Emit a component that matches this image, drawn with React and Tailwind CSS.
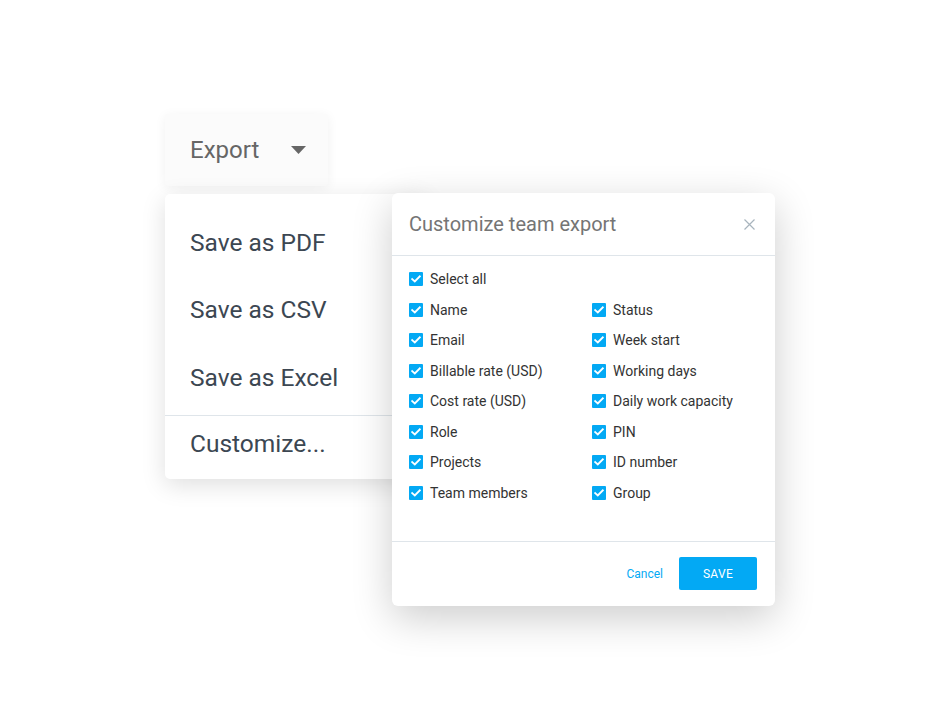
import React from "react";

const left = ["Name", "Email", "Billable rate (USD)", "Cost rate (USD)", "Role", "Projects", "Team members"];
const right = ["Status", "Week start", "Working days", "Daily work capacity", "PIN", "ID number", "Group"];

function Check() {
  return (
    <span className="w-[14px] h-[14px] bg-[#03a9f4] rounded-[1px] flex items-center justify-center shrink-0">
      <svg width="10" height="8" viewBox="0 0 10 8" fill="none">
        <path d="M1.2 4.1 L3.8 6.5 L8.8 1.4" stroke="white" strokeWidth="1.9" strokeLinecap="square" />
      </svg>
    </span>
  );
}

function Item({ label }) {
  return (
    <div className="flex items-center gap-[7px] h-[20px]">
      <Check />
      <span className="text-[14px] text-[#333] leading-none">{label}</span>
    </div>
  );
}

export default function App() {
  return (
    <div className="relative w-[940px] h-[720px] bg-white overflow-hidden" style={{ fontFamily: "Roboto, 'Liberation Sans', sans-serif" }}>
      <div className="pt-[114px] pl-[165px] flex flex-col gap-[8px]">
        <div className="w-[163px] h-[72px] bg-[#fbfbfb] rounded-[3px] shadow-[0_2px_12px_rgba(0,0,0,0.06)] flex items-center justify-between pl-[25px] pr-[22px]">
          <span className="text-[24px] text-[#666] leading-none">Export</span>
          <svg width="15" height="8" viewBox="0 0 15 8"><path d="M0 0 H15 L7.5 8 Z" fill="#666" /></svg>
        </div>
        <div className="w-[260px] h-[285px] bg-white rounded-[5px] shadow-[0_6px_24px_rgba(0,0,0,0.13)] flex flex-col pt-[15px]">
          {["Save as PDF", "Save as CSV", "Save as Excel"].map((t) => (
            <div key={t} className="h-[67.5px] flex items-center pl-[25px] text-[24.5px] text-[#3c4752] leading-none">{t}</div>
          ))}
          <div className="mt-[3.5px] border-t border-[#dfe5ea]" />
          <div className="h-[56px] flex items-center pl-[25px] text-[24.5px] text-[#3c4752] leading-none">Customize...</div>
        </div>
      </div>

      <div className="absolute left-[392px] top-[193px] w-[383px] h-[413px] bg-white rounded-[6px] shadow-[0_12px_40px_rgba(0,0,0,0.2)] flex flex-col">
        <div className="h-[63px] flex items-center justify-between pl-[17px] pr-[20px] border-b border-[#dfe5ea] shrink-0">
          <span className="text-[20px] text-[#757575] leading-none">Customize team export</span>
          <svg width="11" height="11" viewBox="0 0 11 11"><path d="M0.5 0.5 L10.5 10.5 M10.5 0.5 L0.5 10.5" stroke="#a8b4bd" strokeWidth="1.2" /></svg>
        </div>
        <div className="h-[286px] border-b border-[#dfe5ea] pt-[13px] pl-[17px] shrink-0">
          <Item label="Select all" />
          <div className="grid grid-cols-[183px_183px] gap-y-[10.5px] mt-[10.5px]">
            {left.map((l, i) => (
              <React.Fragment key={l}>
                <Item label={l} />
                <Item label={right[i]} />
              </React.Fragment>
            ))}
          </div>
        </div>
        <div className="flex-1 flex items-start justify-end pt-[15px] pr-[18px] gap-[16px]">
          <span className="h-[33px] flex items-center text-[12px] text-[#03a9f4]">Cancel</span>
          <button className="w-[78px] h-[33px] bg-[#03a9f4] text-white text-[12px] rounded-[2px] tracking-[0.3px]">SAVE</button>
        </div>
      </div>
    </div>
  );
}
